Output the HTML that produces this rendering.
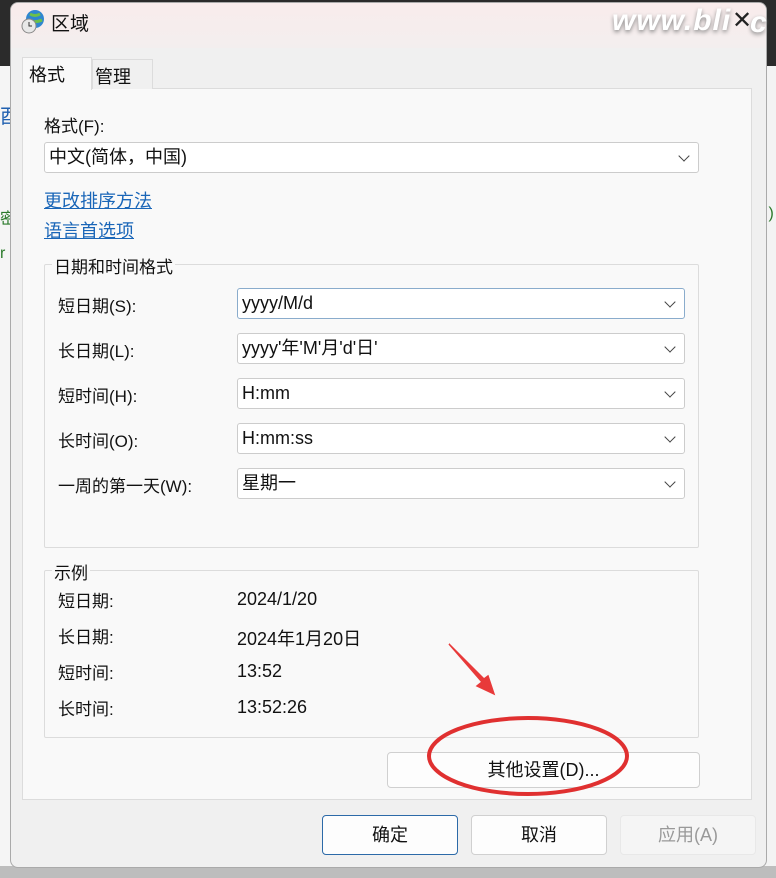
<!DOCTYPE html><html><head><meta charset="utf-8"><style>
*{margin:0;padding:0;box-sizing:border-box}
body{width:776px;height:878px;position:relative;overflow:hidden;background:#f3f3f3;font-family:"Liberation Sans","Noto Sans CJK SC",sans-serif;font-size:17px;color:#111}
.a{position:absolute}
.cb{position:absolute;background:#fff;border:1px solid #ccc;border-radius:3px;height:31px;line-height:29px;padding-left:4px;font-size:18px}
.cb:after{content:"";position:absolute;right:10px;top:9px;width:7px;height:7px;border-right:1.3px solid #444;border-bottom:1.3px solid #444;transform:rotate(45deg)}
.lbl{position:absolute;left:58px;font-size:17px}
.btn{position:absolute;background:#fdfdfd;border:1px solid #d0d0d0;border-radius:4px;text-align:center;font-size:18px}
</style></head><body>
<div class="a" style="left:0;top:0;width:776px;height:66px;background:#2b2b2b"></div>
<div class="a" style="left:0;top:66px;width:12px;height:812px;background:#f5f5f5"></div>
<div class="a" style="left:0;top:100px;color:#2060b0;font-size:20px">酉</div>
<div class="a" style="left:0;top:205px;color:#2a7a2a;font-size:16px">密</div>
<div class="a" style="left:0;top:245px;color:#2a7a2a;font-size:16px">r</div>
<div class="a" style="left:764px;top:205px;color:#2a7a2a;font-size:16px">:)</div>
<div class="a" style="left:0;top:866px;width:776px;height:12px;background:#bdbdbd"></div>
<div class="a" style="left:10px;top:2px;width:757px;height:866px;background:#f0f0f0;border-radius:8px;border:1px solid #aaa;overflow:hidden">
<div class="a" style="left:0;top:0;width:757px;height:45px;background:linear-gradient(#f9ecec,#f3eeee)"></div>
</div>
<svg class="a" style="left:20px;top:9px" width="26" height="26" viewBox="0 0 26 26"><circle cx="15" cy="10" r="9" fill="#2f86d0"/><path d="M10 5q5 3 10 0M8 12q7 2 14-1" stroke="#6cc04a" stroke-width="3" fill="none"/><circle cx="9" cy="17" r="7" fill="#e8e8e8" stroke="#888"/><path d="M9 13v4h3" stroke="#333" fill="none"/></svg>
<div class="a" style="left:51px;top:9px;font-size:19px">区域</div>
<div class="a" style="left:612px;top:4px;font-size:30px;font-weight:bold;font-style:italic;color:#fff;text-shadow:0 2px 4px #888;letter-spacing:1px">www.bli</div>
<div class="a" style="left:732px;top:6px;font-size:24px;color:#222">✕</div>
<div class="a" style="left:750px;top:6px;font-size:30px;font-weight:bold;font-style:italic;color:#fff;text-shadow:0 2px 4px #888">c</div>
<div class="a" style="left:22px;top:88px;width:730px;height:712px;background:#f9f9f9;border:1px solid #dcdcdc"></div>
<div class="a" style="left:92px;top:59px;width:61px;height:30px;background:#f0f0f0;border:1px solid #dcdcdc;border-bottom:none"></div>
<div class="a" style="left:22px;top:57px;width:70px;height:33px;background:#f9f9f9;border:1px solid #dcdcdc;border-bottom:none"></div>
<div class="a" style="left:29px;top:61px;font-size:18px">格式</div>
<div class="a" style="left:95px;top:63px;font-size:18px">管理</div>
<div class="a" style="left:44px;top:112px;font-size:17px">格式(F):</div>
<div class="cb" style="left:44px;top:142px;width:655px">中文(简体，中国)</div>
<div class="a" style="left:44px;top:187px;color:#1a66b8;text-decoration:underline;font-size:18px">更改排序方法</div>
<div class="a" style="left:44px;top:217px;color:#1a66b8;text-decoration:underline;font-size:18px">语言首选项</div>
<div class="a" style="left:44px;top:264px;width:655px;height:284px;border:1px solid #dcdcdc;border-radius:2px"></div>
<div class="a" style="left:52px;top:253px;background:#f9f9f9;padding:0 2px;font-size:17px">日期和时间格式</div>
<div class="lbl" style="top:292px">短日期(S):</div>
<div class="lbl" style="top:337px">长日期(L):</div>
<div class="lbl" style="top:382px">短时间(H):</div>
<div class="lbl" style="top:427px">长时间(O):</div>
<div class="lbl" style="top:472px">一周的第一天(W):</div>
<div class="cb" style="left:237px;top:288px;width:448px;border-color:#8aaccc">yyyy/M/d</div>
<div class="cb" style="left:237px;top:333px;width:448px">yyyy'年'M'月'd'日'</div>
<div class="cb" style="left:237px;top:378px;width:448px">H:mm</div>
<div class="cb" style="left:237px;top:423px;width:448px">H:mm:ss</div>
<div class="cb" style="left:237px;top:468px;width:448px">星期一</div>
<div class="a" style="left:44px;top:570px;width:655px;height:168px;border:1px solid #dcdcdc;border-radius:2px"></div>
<div class="a" style="left:52px;top:559px;background:#f9f9f9;padding:0 2px">示例</div>
<div class="lbl" style="top:587px">短日期:</div>
<div class="lbl" style="top:623px">长日期:</div>
<div class="lbl" style="top:659px">短时间:</div>
<div class="lbl" style="top:695px">长时间:</div>
<div class="a" style="left:237px;top:589px;font-size:18px">2024/1/20</div>
<div class="a" style="left:237px;top:625px;font-size:18px">2024年1月20日</div>
<div class="a" style="left:237px;top:661px;font-size:18px">13:52</div>
<div class="a" style="left:237px;top:697px;font-size:18px">13:52:26</div>
<div class="btn" style="left:387px;top:752px;width:313px;height:36px;line-height:34px">其他设置(D)...</div>
<div class="btn" style="left:322px;top:815px;width:136px;height:40px;line-height:38px;border-color:#2c6aa8">确定</div>
<div class="btn" style="left:471px;top:815px;width:136px;height:40px;line-height:38px">取消</div>
<div class="btn" style="left:620px;top:815px;width:136px;height:40px;line-height:38px;background:#f5f5f5;border-color:#e8e8e8;color:#999">应用(A)</div>
<svg class="a" style="left:0;top:0" width="776" height="878"><ellipse cx="528" cy="756" rx="99" ry="38" fill="none" stroke="#e03030" stroke-width="4"/><path d="M449 644L482 682L477 686L494 694L488 676L484 679Z" fill="#e83a3a" stroke="#e83a3a" stroke-width="1.5"/></svg>
</body></html>
